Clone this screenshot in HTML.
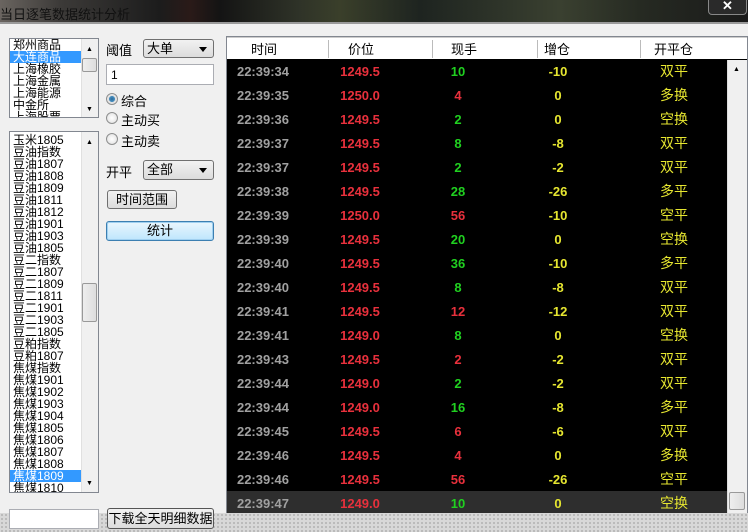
<!DOCTYPE html>
<html><head><meta charset="utf-8"><style>
*{box-sizing:border-box;margin:0;padding:0}
body{width:748px;height:532px;overflow:hidden;background:#f0f0f0;font-family:"Liberation Sans","SimSun","WenQuanYi Zen Hei",sans-serif;font-size:12px;position:relative}
.abs{position:absolute}
.title{left:0;top:0;width:748px;height:24px;background:linear-gradient(90deg,#6a6560 0,#3c3a38 60px,#1c1c1c 160px,#2a1a18 190px,#141414 220px,#2f3328 300px,#3a3f2a 340px,#1e2420 420px,#3a4030 560px,#262a22 640px,#1a1a1a 748px);border-bottom:2px solid #9a9a9a}
.title span{position:absolute;left:0;top:4px;font-size:13px;color:#111;font-family:"WenQuanYi Zen Hei",sans-serif}
.close{left:708px;top:-2px;width:39px;height:17px;border:1px solid #888;border-top:none;border-radius:0 0 4px 4px;color:#fff;font-weight:bold;text-align:center;font-size:13px;line-height:15px;background:#2a2a2a}
.list{background:#fff;border:1px solid #828790;overflow:hidden}
.list div{height:12px;line-height:12px;font-size:12px;padding-left:3px;font-family:"WenQuanYi Zen Hei",sans-serif;white-space:nowrap}
.sel{background:#3399ff;color:#fff}
.sb{background:#f0f0f0;border-left:1px solid #e0e0e0}
.thumb{background:linear-gradient(90deg,#eee,#ddd);border:1px solid #999;border-radius:2px}
.btn{border:1px solid #707070;border-radius:3px;background:linear-gradient(#f2f2f2,#dcdcdc);text-align:center;font-family:"WenQuanYi Zen Hei",sans-serif;font-size:13px}
.sel2{border:1px solid #707070;border-radius:3px;background:linear-gradient(#f2f2f2,#dcdcdc);font-size:13px;padding-left:3px;font-family:"WenQuanYi Zen Hei",sans-serif}
.sel2:after{content:"";position:absolute;right:6px;top:7px;border:4px solid transparent;border-top:5px solid #000}
.lab{font-size:13px;font-family:"WenQuanYi Zen Hei",sans-serif}
.radio{width:12px;height:12px;border-radius:50%;border:1px solid #8e8f8f;background:radial-gradient(#fff,#ddd)}
.radio.on{background:radial-gradient(#2a6a9a 0,#4a90c0 40%,#ddd 45%,#fff)}
table{border-collapse:collapse;position:absolute;left:227px;top:59px;width:500px;background:#000;table-layout:fixed}
td{height:24px;text-align:center;font-weight:bold;font-size:13px;padding:0}
.t{color:#a0a0a0}.r{color:#e8303c}.g{color:#20d020}.y{color:#e6e630}.z{color:#e6e630;font-weight:normal;font-family:"WenQuanYi Zen Hei",sans-serif;font-size:14px}
tr.h{background:#2e2e2e}
.hdr{left:227px;top:37px;width:520px;height:22px;background:#fff;border-top:1px solid #ccc}
.hdr span{position:absolute;top:1px;font-size:13px;font-family:"WenQuanYi Zen Hei",sans-serif}
.hdr i{position:absolute;top:2px;width:1px;height:18px;background:#bbb}
.dots{left:0;top:513px;width:748px;height:19px;background-color:#d8d8d8;background-image:radial-gradient(#a8a8a8 0.7px,transparent 1px);background-size:4px 4px}
</style></head><body>
<div class="abs title"><span>当日逐笔数据统计分析</span></div>
<div class="abs close">✕</div>
<div class="abs" style="left:226px;top:36px;width:522px;height:480px;background:#000;border:1px solid #828790"></div>

<div class="abs list" style="left:9px;top:38px;width:90px;height:80px">
<div>郑州商品</div><div class="sel" style="width:71px">大连商品</div><div>上海橡胶</div><div>上海金属</div><div>上海能源</div><div>中金所</div><div>上海股票</div>
</div>
<div class="abs sb" style="left:81px;top:39px;width:17px;height:78px"></div>
<div class="abs thumb" style="left:82px;top:58px;width:15px;height:14px"></div>
<div class="abs" style="left:86px;top:46px;font-size:7px">▲</div>
<div class="abs" style="left:86px;top:106px;font-size:7px">▼</div>

<div class="abs list" style="left:9px;top:131px;width:90px;height:362px;padding-top:2px">
<div>玉米1805</div><div>豆油指数</div><div>豆油1807</div><div>豆油1808</div><div>豆油1809</div><div>豆油1811</div><div>豆油1812</div><div>豆油1901</div><div>豆油1903</div><div>豆油1805</div><div>豆二指数</div><div>豆二1807</div><div>豆二1809</div><div>豆二1811</div><div>豆二1901</div><div>豆二1903</div><div>豆二1805</div><div>豆粕指数</div><div>豆粕1807</div><div>焦煤指数</div><div>焦煤1901</div><div>焦煤1902</div><div>焦煤1903</div><div>焦煤1904</div><div>焦煤1805</div><div>焦煤1806</div><div>焦煤1807</div><div>焦煤1808</div><div class="sel" style="width:71px">焦煤1809</div><div>焦煤1810</div>
</div>
<div class="abs sb" style="left:81px;top:132px;width:17px;height:360px"></div>
<div class="abs thumb" style="left:82px;top:283px;width:15px;height:39px"></div>
<div class="abs" style="left:86px;top:139px;font-size:7px">▲</div>
<div class="abs" style="left:86px;top:480px;font-size:7px">▼</div>

<div class="abs lab" style="left:106px;top:40px">阈值</div>
<div class="abs sel2" style="left:143px;top:39px;width:71px;height:19px;line-height:17px">大单</div>
<div class="abs" style="left:106px;top:64px;width:108px;height:21px;background:#fff;border:1px solid #abadb3;padding:3px 4px;font-size:12px">1</div>
<div class="abs radio on" style="left:106px;top:93px"></div><div class="abs lab" style="left:121px;top:91px">综合</div>
<div class="abs radio" style="left:106px;top:112px"></div><div class="abs lab" style="left:121px;top:110px">主动买</div>
<div class="abs radio" style="left:106px;top:133px"></div><div class="abs lab" style="left:121px;top:131px">主动卖</div>
<div class="abs lab" style="left:106px;top:162px">开平</div>
<div class="abs sel2" style="left:143px;top:160px;width:71px;height:20px;line-height:18px">全部</div>
<div class="abs btn" style="left:107px;top:190px;width:70px;height:19px;line-height:17px">时间范围</div>
<div class="abs btn" style="left:106px;top:221px;width:108px;height:20px;line-height:18px;border-color:#3c7fb1;background:linear-gradient(#eaf6fd,#bee6fd);box-shadow:0 0 0 1px #a0d0f0 inset">统计</div>

<div class="abs hdr"><span style="left:24px">时间</span><i style="left:101px"></i><span style="left:121px">价位</span><i style="left:205px"></i><span style="left:224px">现手</span><i style="left:310px"></i><span style="left:317px">增仓</span><i style="left:413px"></i><span style="left:427px">开平仓</span></div>

<table>
<colgroup><col style="width:72px"><col style="width:122px"><col style="width:74px"><col style="width:126px"><col style="width:106px"></colgroup>
<tr><td class="t">22:39:34</td><td class="r">1249.5</td><td class="g">10</td><td class="y">-10</td><td class="z">双平</td></tr>
<tr><td class="t">22:39:35</td><td class="r">1250.0</td><td class="r">4</td><td class="y">0</td><td class="z">多换</td></tr>
<tr><td class="t">22:39:36</td><td class="r">1249.5</td><td class="g">2</td><td class="y">0</td><td class="z">空换</td></tr>
<tr><td class="t">22:39:37</td><td class="r">1249.5</td><td class="g">8</td><td class="y">-8</td><td class="z">双平</td></tr>
<tr><td class="t">22:39:37</td><td class="r">1249.5</td><td class="g">2</td><td class="y">-2</td><td class="z">双平</td></tr>
<tr><td class="t">22:39:38</td><td class="r">1249.5</td><td class="g">28</td><td class="y">-26</td><td class="z">多平</td></tr>
<tr><td class="t">22:39:39</td><td class="r">1250.0</td><td class="r">56</td><td class="y">-10</td><td class="z">空平</td></tr>
<tr><td class="t">22:39:39</td><td class="r">1249.5</td><td class="g">20</td><td class="y">0</td><td class="z">空换</td></tr>
<tr><td class="t">22:39:40</td><td class="r">1249.5</td><td class="g">36</td><td class="y">-10</td><td class="z">多平</td></tr>
<tr><td class="t">22:39:40</td><td class="r">1249.5</td><td class="g">8</td><td class="y">-8</td><td class="z">双平</td></tr>
<tr><td class="t">22:39:41</td><td class="r">1249.5</td><td class="r">12</td><td class="y">-12</td><td class="z">双平</td></tr>
<tr><td class="t">22:39:41</td><td class="r">1249.0</td><td class="g">8</td><td class="y">0</td><td class="z">空换</td></tr>
<tr><td class="t">22:39:43</td><td class="r">1249.5</td><td class="r">2</td><td class="y">-2</td><td class="z">双平</td></tr>
<tr><td class="t">22:39:44</td><td class="r">1249.0</td><td class="g">2</td><td class="y">-2</td><td class="z">双平</td></tr>
<tr><td class="t">22:39:44</td><td class="r">1249.0</td><td class="g">16</td><td class="y">-8</td><td class="z">多平</td></tr>
<tr><td class="t">22:39:45</td><td class="r">1249.5</td><td class="r">6</td><td class="y">-6</td><td class="z">双平</td></tr>
<tr><td class="t">22:39:46</td><td class="r">1249.5</td><td class="r">4</td><td class="y">0</td><td class="z">多换</td></tr>
<tr><td class="t">22:39:46</td><td class="r">1249.5</td><td class="r">56</td><td class="y">-26</td><td class="z">空平</td></tr>
<tr class="h"><td class="t">22:39:47</td><td class="r">1249.0</td><td class="g">10</td><td class="y">0</td><td class="z">空换</td></tr>
</table>
<div class="abs" style="left:727px;top:60px;width:20px;height:455px;background:#f0f0f0;border-left:1px solid #ddd"></div>
<div class="abs" style="left:733px;top:66px;font-size:7px">▲</div>
<div class="abs thumb" style="left:729px;top:492px;width:16px;height:18px"></div>

<div class="abs dots"></div>
<div class="abs" style="left:9px;top:509px;width:90px;height:20px;background:#fff;border:1px solid #abadb3"></div>
<div class="abs btn" style="left:107px;top:508px;width:107px;height:21px;line-height:19px;border-color:#555">下载全天明细数据</div>
</body></html>
